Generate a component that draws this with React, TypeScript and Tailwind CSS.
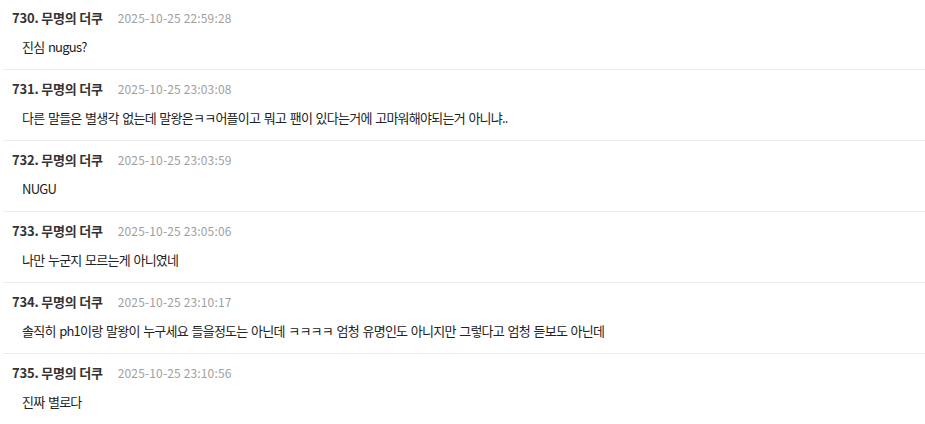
const comments = [
  { no: 730, time: "2025-10-25 22:59:28", body: "진심 nugus?" },
  {
    no: 731,
    time: "2025-10-25 23:03:08",
    body: "다른 말들은 별생각 없는데 말왕은ㅋㅋ어플이고 뭐고 팬이 있다는거에 고마워해야되는거 아니냐..",
  },
  { no: 732, time: "2025-10-25 23:03:59", body: "NUGU" },
  { no: 733, time: "2025-10-25 23:05:06", body: "나만 누군지 모르는게 아니였네" },
  {
    no: 734,
    time: "2025-10-25 23:10:17",
    body: "솔직히 ph1이랑 말왕이 누구세요 들을정도는 아닌데 ㅋㅋㅋㅋ 엄청 유명인도 아니지만 그렇다고 엄청 듣보도 아닌데",
  },
  { no: 735, time: "2025-10-25 23:10:56", body: "진짜 별로다" },
];

export default function App() {
  return (
    <div
      className="min-h-screen bg-white"
      style={{ fontFamily: '"Noto Sans CJK KR", "Noto Sans", sans-serif' }}
    >
      <ul className="ml-[3px] -mt-px">
        {comments.map((c) => (
          <li key={c.no} className="border-b border-[#ececec] last:border-b-0 pl-[9px] pt-[11px] pb-[13px]">
            <div className="flex items-center h-4">
              <span className="text-[13px] font-bold text-[#333] tracking-[-0.2px]">
                {c.no}. 무명의 더쿠
              </span>
              <span className="ml-[15px] text-[12px] text-[#a0a0a0] tracking-[0.15px]">{c.time}</span>
            </div>
            <p className="mt-[12px] pl-[10px] h-[18px] leading-[18px] text-[13px] text-[#222] tracking-[-0.75px] [word-spacing:1.35px] whitespace-nowrap">
              {c.body}
            </p>
          </li>
        ))}
      </ul>
    </div>
  );
}
